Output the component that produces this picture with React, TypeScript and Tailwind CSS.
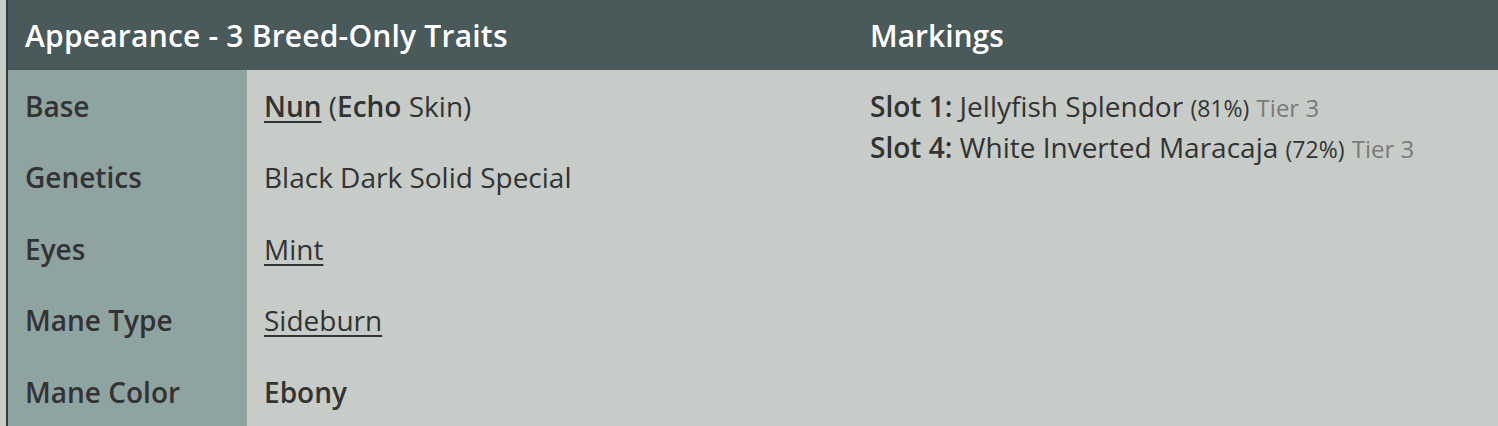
import React from "react";

const rows: { label: string; value: React.ReactNode }[] = [
  {
    label: "Base",
    value: (
      <>
        <span className="font-semibold underline underline-offset-[4px] decoration-[2px]">Nun</span> (
        <span className="font-semibold">Echo</span> Skin)
      </>
    ),
  },
  { label: "Genetics", value: <>Black Dark Solid Special</> },
  { label: "Eyes", value: <span className="underline underline-offset-[4px] decoration-[1.5px]">Mint</span> },
  { label: "Mane Type", value: <span className="underline underline-offset-[4px] decoration-[1.5px]">Sideburn</span> },
  { label: "Mane Color", value: <span className="font-semibold">Ebony</span> },
];

export default function App() {
  return (
    <div
      className="w-[1498px] h-[426px] overflow-hidden bg-[#c7ccc8] pl-[6px] text-[#333]"
      style={{ fontFamily: '"Open Sans", sans-serif' }}
    >
      <div className="h-full border-l-2 border-[#2e3a3b] flex flex-col">
        <div className="h-[70px] shrink-0 bg-[#4a5a5a] flex items-center text-white font-semibold text-[30px]">
          <div className="w-[845px] pl-[17px] tracking-[0.2px]">Appearance - 3 Breed-Only Traits</div>
          <div className="pl-[17px]">Markings</div>
        </div>
        <div className="flex flex-1">
          <div className="w-[845px] flex flex-col">
            {rows.map((r) => (
              <div key={r.label} className="flex h-[71.5px] items-center text-[28px]">
                <div className="w-[239px] h-full bg-[#8fa3a1] pl-[17px] flex items-center font-semibold">
                  {r.label}
                </div>
                <div className="pl-[17px]">{r.value}</div>
              </div>
            ))}
          </div>
          <div className="pl-[17px] pt-[17px] text-[28px] leading-[39px]">
            <div>
              <span className="font-semibold">Slot 1:</span> Jellyfish Splendor{" "}
              <span className="text-[23px]">(81%)</span>{" "}
              <span className="text-[24px] text-[#7a7a7a]">Tier 3</span>
            </div>
            <div>
              <span className="font-semibold">Slot 4:</span> White Inverted Maracaja{" "}
              <span className="text-[23px]">(72%)</span>{" "}
              <span className="text-[24px] text-[#7a7a7a]">Tier 3</span>
            </div>
          </div>
        </div>
      </div>
    </div>
  );
}
